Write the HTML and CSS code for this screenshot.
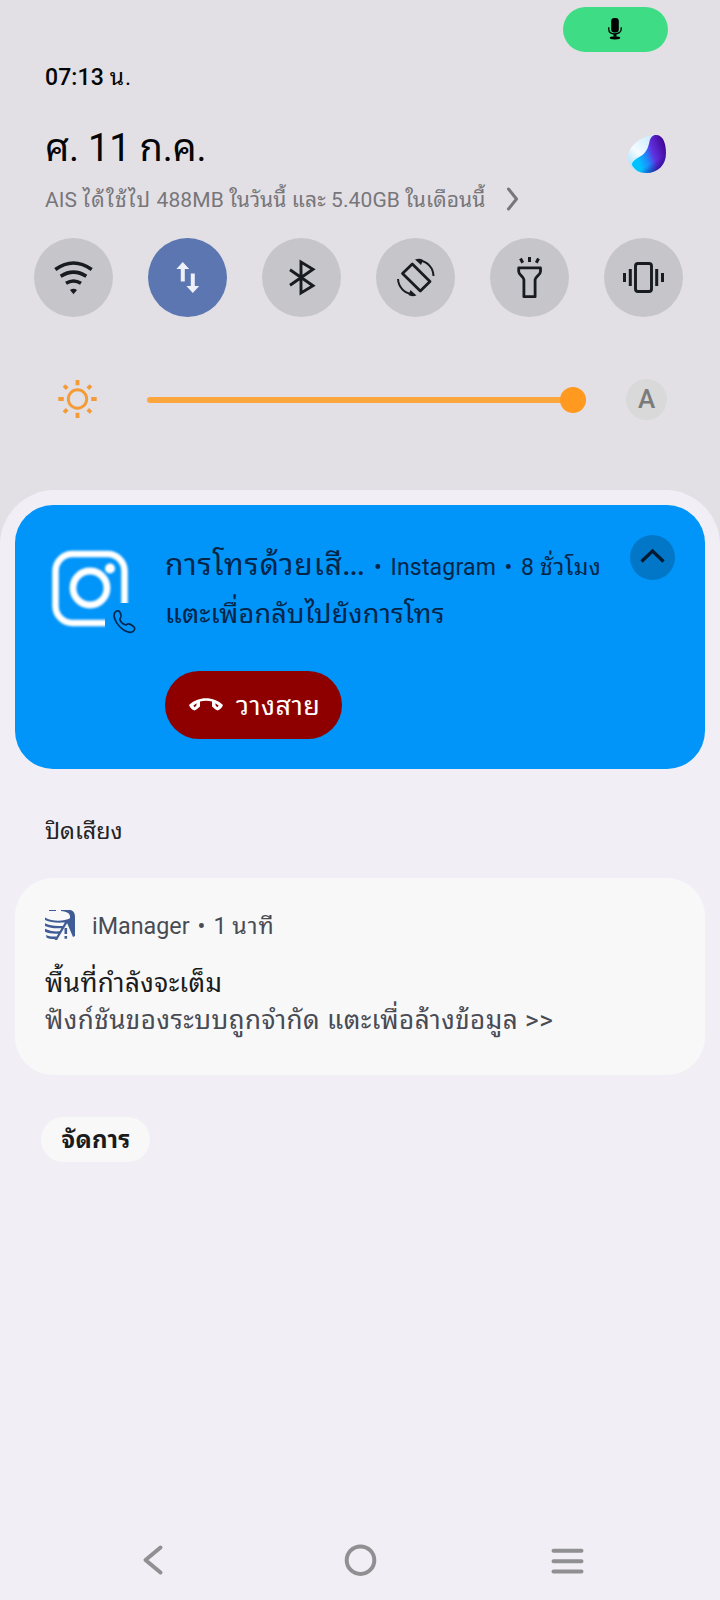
FILE: index.html
```html
<!DOCTYPE html>
<html lang="th">
<head>
<meta charset="utf-8">
<title>Notifications</title>
<link rel="stylesheet" href="styles.css">
</head>
<body>
<div class="screen">
  <header class="quick">
    <div class="privacy">
      <div class="mic-pill">
        <svg width="14" height="24" viewBox="0 0 14 24"><rect x="3.200" y="1" width="7.600" height="14.500" rx="3.200"/><path d="M.8 10.200v2C.8 15.200 3.600 16.800 7 16.800s6.200-1.600 6.200-4.600v-2" fill="none" stroke="#000" stroke-width="1.300"/><path d="M5.500 17h3v2.500h-3z"/><ellipse cx="7" cy="20.800" rx="5.300" ry="1.600"/></svg>
      </div>
    </div>
    <div class="line time"><span>07:13 <span class="regular">น.</span></span></div>
    <div class="date-row">
      <div class="line date"><span>ศ. 11 ก.ค.</span></div>
      <svg class="orb" width="40" height="40" viewBox="0 0 40 40">
        <defs>
          <linearGradient id="orbWhite" x1="0" y1="1" x2="1" y2="0"><stop offset="0" stop-color="#8fd8fb"/><stop offset=".4" stop-color="#f4fbff"/><stop offset="1" stop-color="#b5e6ff"/></linearGradient>
          <linearGradient id="orbBlue" x1="0" y1=".8" x2="1" y2=".4"><stop offset=".2" stop-color="#00c2ff"/><stop offset=".45" stop-color="#2185fb"/><stop offset=".65" stop-color="#6130de"/><stop offset="1" stop-color="#44089c"/></linearGradient>
          <linearGradient id="orbShade" x1=".4" y1=".5" x2=".7" y2="1"><stop offset=".5" stop-color="#17058a" stop-opacity="0"/><stop offset="1" stop-color="#17056f" stop-opacity=".7"/></linearGradient>
        </defs>
        <path d="M1 23C1 11 17 1 28 1c7 0 11 8 11 18 0 12-8 20-20 20C8 39 1 32 1 23Z" fill="url(#orbWhite)"/>
        <path d="M29 1c7 0 10 8 10 18 0 12-8 20-20 20-7 0-11-3-14-8 0-4 4-6 8-8.500 6-3.500 8-8 9.500-15 1-4 3-6.500 6.500-6.500Z" fill="url(#orbBlue)"/>
        <path d="M29 1c7 0 10 8 10 18 0 12-8 20-20 20-7 0-11-3-14-8 0-4 4-6 8-8.500 6-3.500 8-8 9.500-15 1-4 3-6.500 6.500-6.500Z" fill="url(#orbShade)"/>
      </svg>
    </div>
    <div class="usage">
      <div class="line data"><span>AIS <span class="wide">ได้ใช้ไป</span> 488MB <span class="th">ในวันนี้ และ</span> 5.40GB <span class="th">ในเดือนนี้</span></span></div>
      <svg width="14" height="26" viewBox="0 0 14 26"><path d="M2.500 3l8 10-8 10" fill="none" stroke="#77767a" stroke-width="3" stroke-linecap="round" stroke-linejoin="round"/></svg>
    </div>
    <div class="tiles">
      <div class="tile"><svg viewBox="0 0 79 79" class="ink"><path d="M21.300 31.500Q39.500 18.500 57.700 31.500M26.700 38.300Q39.500 30 52.300 38.300M32 45.300Q39.500 40.700 47 45.300" stroke-width="3.500"/><path class="solid" d="M36 52q3.500-2.600 7 0L39.500 56.300z"/></svg></div>
      <div class="tile on"><svg viewBox="0 0 79 79" fill="#eef0fa"><path d="M34.800 24l6.400 7h-4.400v12.500h-4V31h-4.400zM44.800 55l-6.400-7h4.400V35.500h4V48h4.400z"/></svg></div>
      <div class="tile"><svg viewBox="0 0 79 79" class="ink"><path d="M28 31.800L51 47.700 39 55V24L51 31.300 28 47.200" stroke-width="2.900"/></svg></div>
      <div class="tile"><svg viewBox="0 0 79 79" class="ink"><path d="M36.300 26L54 43.500 44.300 53 26.500 35.500Z" stroke-width="2.800" stroke-linejoin="round"/><path d="M44 22.500C52 24 57.300 30 57.500 38M22 41C22.500 49 28 55 35.500 56" stroke-width="2"/><path class="solid" d="M39 21.500q5-1.500 8 .5L45 27zM40.500 57.500q-5 1.500-8-.5L34.500 52z"/></svg></div>
      <div class="tile"><svg viewBox="0 0 79 79" class="ink"><path d="M28.700 29.900h21.800v3.500c0 3.500-5 5-5.400 8.300v17H33.900v-17c-.4-3.300-5.200-4.800-5.200-8.300Z" stroke-width="2.800" stroke-linejoin="round"/><path d="M39.500 19v5M30.500 20.500l2.200 4.300M48.500 20.500l-2.200 4.300" stroke-width="3"/></svg></div>
      <div class="tile"><svg viewBox="0 0 79 79" class="ink"><rect x="31.500" y="25.500" width="16" height="28" rx="2.500" stroke-width="2.900"/><path d="M26.300 31v17M52.700 31v17M20.500 35v9M58.500 35v9" stroke-width="3"/></svg></div>
    </div>
    <div class="brightness">
      <svg class="sun" width="40" height="40" viewBox="0 0 40 40" fill="none" stroke="#f59b36"><circle cx="20.500" cy="20" r="9.200" stroke-width="2.900"/><path d="M20.500 1v5.200M20.500 33.800V39M1.300 20h5.500M34.200 20h5.500M7 6.500l3.200 3.200M30.800 30.300l3.200 3.200M7 33.500l3.200-3.200M30.800 9.700l3.200-3.200" stroke-width="3.800"/></svg>
      <div class="track"><div class="thumb"></div></div>
      <div class="auto">A</div>
    </div>
  </header>

  <main class="panel">
    <section class="card call">
      <svg class="app" width="92" height="92" viewBox="0 0 92 92">
        <defs><filter id="soft"><feGaussianBlur stdDeviation="1"/></filter></defs>
        <g filter="url(#soft)"><rect x="10.500" y="9" width="69" height="69" rx="17" fill="none" stroke="#fff" stroke-width="6.500"/><circle cx="45" cy="43" r="17" fill="none" stroke="#fff" stroke-width="6.800"/><circle cx="65" cy="23.500" r="5" fill="#fff"/></g>
        <rect x="60" y="58" width="32" height="34" fill="#0194f9"/>
        <path transform="translate(1.300 -.5)" d="M69 67.500c2-2 4-1.500 5 1 1.500 3 1 4-.5 6 .5 3 3 5 6 6 2.500-1.500 3.500-1.500 6.500.5 3 2 3 3.500 1.200 5.500-3 3-9 .5-13.500-4-5-5-7.500-12-4.700-15Z" fill="none" stroke="#03274c" stroke-width="1.700"/>
      </svg>
      <div class="call-body">
        <div class="call-head">
          <div class="line call-title"><span>การโทรด้วยเสี<b>...</b></span></div>
          <div class="line call-meta"><span>•</span><span class="name">Instagram</span><span>•</span><span class="ago">8 <span class="th">ชั่วโมง</span></span></div>
        </div>
        <div class="line call-text"><span>แตะเพื่อกลับไปยังการโทร</span></div>
        <div class="hangup">
          <svg width="36" height="16" viewBox="0 0 36 16"><path fill="#fff" fill-rule="evenodd" d="M1 8C10-1 26-1 35 8c-1 3-3 4.500-5.500 5.500-2-1-4-2.500-5.500-4V4.500q-6-1.500-12 0v5c-1.500 1.500-3.500 3-5.500 4C4 12.500 2 11 1 8Zm4.300.7 1.500 1.500L8.500 8.300V6.300ZM30.700 8.700l-1.500 1.500L27.500 8.300V6.300Z"/></svg>
          <div class="line hangup-text"><span>วางสาย</span></div>
        </div>
      </div>
      <div class="collapse"><svg width="45" height="45" viewBox="0 0 45 45"><path d="M11.500 26.500l11-10.500 11 10.500" fill="none" stroke="#031a33" stroke-width="3.300"/></svg></div>
    </section>

    <div class="line section"><span>ปิดเสียง</span></div>

    <section class="card manager">
      <div class="manager-head">
        <svg width="30" height="30" viewBox="0 0 30 30"><path fill="#405c97" d="M16 0h9c3.500.5 5 3 5 7v19l-2 1-5.500-13-1.500-3 4-2.500V6c-1-3.500-4-4.500-9-5ZM4 0h7v1H4ZM0 7.500C7 11.500 18 12 25.500 8v2.500C18 14 7 13 0 10ZM0 13.200c5 2.500 11 3.300 18.500 2.500l-1.500 2.400C10 18.700 5 18 0 16ZM0 18.800c4 2 9 3 14.800 2.500l-1.400 2.400C8 24 4 23.500 0 21.800ZM1 25c3 1.200 6 1.800 10.500 1.500L10 29C6 29 3 28.500 1.500 27.500ZM21 10.500l1.800 1.500L12 30H9.500Z"/><path d="M20.800 18v6M20.800 26v2.700" stroke="#405c97" stroke-width="2.600"/></svg>
        <div class="line manager-meta"><span class="name">iManager</span><span>•</span><span class="ago">1 <span class="th">นาที</span></span></div>
      </div>
      <div class="line manager-title"><span>พื้นที่กำลังจะเต็ม</span></div>
      <div class="line manager-text"><span>ฟังก์ชันของระบบถูกจำกัด แตะเพื่อล้างข้อมูล &gt;&gt;</span></div>
    </section>

    <div class="manage line"><span>จัดการ</span></div>
  </main>

  <nav class="nav">
    <svg width="36" height="36" viewBox="0 0 36 36"><path d="M25.500 5.500L10.500 18 25.500 30.500" stroke-linejoin="round"/></svg>
    <svg width="36" height="36" viewBox="0 0 36 36"><circle cx="18.500" cy="18.200" r="13.800"/></svg>
    <svg width="36" height="36" viewBox="0 0 36 36"><path d="M4.500 8.700h28M4.500 19.200h28M4.500 29.500h28"/></svg>
  </nav>
</div>
</body>
</html>
```
FILE: styles.css
```css
* { box-sizing: border-box; }
body { margin: 0; font-family: Roboto, "Noto Sans Thai Looped", "Noto Looped Thai", "Noto Sans Thai UI", "Noto Sans Thai", "Noto Sans", sans-serif; line-height: 1.200; }
svg { display: block; flex: none; }
.screen { width: 720px; height: 1600px; display: flex; flex-direction: column; background: #e2e0e5; overflow: hidden; }
.line { display: flex; align-items: center; white-space: nowrap; }

.quick { height: 490px; flex: none; }
.privacy { height: 60px; padding: 7px 52px 0 0; display: flex; justify-content: flex-end; }
.mic-pill { width: 105px; height: 45px; padding: 0 1px 1px 0; border-radius: 23px; background: #3fdc86; display: flex; align-items: center; justify-content: center; }
.time { height: 34px; padding: 2px 0 0 45px; font-size: 23px; font-weight: 500; letter-spacing: .1px; color: #050506; }
.regular { font-weight: 400; letter-spacing: .9px; }
.date-row { height: 86px; padding: 28px 53px 0 45px; display: flex; justify-content: space-between; }
.date { height: 52px; padding-top: 2px; font-size: 38px; letter-spacing: -.2px; color: #050506; }
.orb { margin-top: 12px; }
.usage { height: 38px; padding-left: 45px; display: flex; align-items: center; gap: 20px; }
.data { width: 441px; padding-top: 4px; font-size: 21px; letter-spacing: .1px; color: #77767a; }
.data .wide { letter-spacing: 1.300px; }
.data .th { letter-spacing: .1px; }
.tiles { margin-top: 20px; padding-left: 34px; display: flex; gap: 35px; }
.tile { width: 79px; height: 79px; border-radius: 50%; background: #c6c5ca; }
.tile.on { background: #5b76b1; }
.ink { fill: none; stroke: #181c20; }
.ink .solid { fill: #181c20; stroke: none; }
.brightness { height: 42px; margin-top: 61px; padding-left: 57px; display: flex; align-items: center; }
.track { width: 439px; height: 6px; margin: 2px 40px 0 50px; border-radius: 3px; background: #fda63e; display: flex; align-items: center; justify-content: flex-end; }
.thumb { width: 26px; height: 26px; border-radius: 50%; background: #ff991f; }
.auto { width: 41px; height: 41px; border-radius: 50%; background: #d9d9d9; color: #7b7b7b; font-size: 26px; font-weight: 500; line-height: 41px; text-align: center; }

.panel { flex: 1; padding: 15px 15px 0; border-radius: 55px 55px 0 0; background: #f1eff5; }
.card { border-radius: 38px; }
.call { height: 264px; display: flex; background: #0194f9; color: #032548; }
.app { margin: 40px 0 0 30px; }
.call-body { width: 465px; padding-top: 38px; margin-left: 28px; }
.call-head { height: 44px; display: flex; }
.call-title { width: 208px; font-size: 30px; letter-spacing: .9px; }
.call-title b { font-size: 25px; letter-spacing: 0; }
.call-meta { gap: 8.500px; font-size: 23px; letter-spacing: .2px; padding: 6px 0 0 1px; }
.call-meta .th { letter-spacing: .4px; }
.call-text { height: 48px; padding-top: 6px; font-size: 27px; letter-spacing: .250px; }
.hangup { width: 177px; height: 68px; margin-top: 36px; padding-left: 23px; border-radius: 34px; background: #8e0000; color: #fff; display: flex; align-items: center; gap: 12px; }
.hangup-text { padding-top: 2px; font-size: 27px; letter-spacing: .450px; }
.collapse { width: 45px; height: 45px; margin: 30px 0 0 0; border-radius: 50%; background: #0277c8; }
.section { height: 48px; margin: 39px 0 22px 30px; font-size: 23.300px; letter-spacing: 0; color: #232326; }
.manager { height: 197px; padding: 27px 30px 0; background: #f8f8f8; }
.manager-head { height: 40px; display: flex; align-items: center; gap: 17px; }
.manager-meta { gap: 8px; padding-top: 4px; font-size: 23.300px; color: #484b54; }
.manager-meta .th { letter-spacing: .9px; }
.manager-title { height: 40px; margin-top: 18px; padding-top: 2px; font-size: 26px; letter-spacing: .450px; color: #1b1b1b; }
.manager-text { height: 38px; margin-top: -2px; padding-top: 2px; font-size: 26px; letter-spacing: .480px; color: #484b54; }
.manage { width: 109px; height: 45px; margin: 42px 0 0 26px; padding: 2px 0 0 1px; border-radius: 23px; justify-content: center; background: #f8f8f8; color: #1b1b1b; font-size: 24px; font-weight: 700; letter-spacing: .3px; }

.nav { height: 80px; padding: 0 135px 0 135px; flex: none; display: flex; align-items: center; justify-content: space-between; background: #f1eff5; }
.nav svg { fill: none; stroke: #908f92; stroke-width: 4; stroke-linecap: round; }
```
